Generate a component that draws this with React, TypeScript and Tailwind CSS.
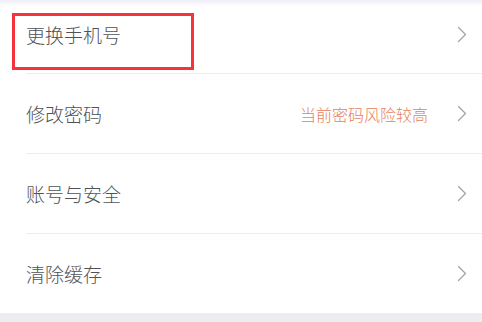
const rows = [
  { label: '更换手机号', hint: '' },
  { label: '修改密码', hint: '当前密码风险较高' },
  { label: '账号与安全', hint: '' },
  { label: '清除缓存', hint: '' },
]

function Chevron() {
  return (
    <svg width="10" height="17" viewBox="0 0 10 17" fill="none" className="shrink-0">
      <path d="M1.5 1.5 L8.5 8.5 L1.5 15.5" stroke="#a2a4a9" strokeWidth="1.3" strokeLinecap="round" strokeLinejoin="round" />
    </svg>
  )
}

export default function App() {
  return (
    <div
      className="relative w-[482px] h-[322px] overflow-hidden bg-white flex flex-col"
      style={{ fontFamily: '"Noto Sans CJK SC", "Noto Sans", sans-serif' }}
    >
      <div className="absolute top-0 left-0 right-0 h-[6px] bg-gradient-to-b from-[#eeeef8] to-white" />
      <ul className="relative flex flex-col">
        {rows.map((row, i) => (
          <li key={row.label} className="flex flex-col">
            <div
              className={`flex items-center pl-[26px] pr-[15px] ${i === 0 ? 'h-[73px] pb-[5px]' : 'h-[79px]'}`}
            >
              <span className="flex-1 text-[19px] font-light leading-none text-[#505257]">{row.label}</span>
              {row.hint && (
                <span className="mr-[29px] text-[16px] font-light leading-none text-[#e57e58]">{row.hint}</span>
              )}
              <Chevron />
            </div>
            {i < rows.length - 1 && <div className="ml-[26px] h-px bg-[#ececef]" />}
          </li>
        ))}
      </ul>
      <div className="flex-1 bg-[#ebedf2]" />
      <div className="absolute left-[12px] top-[13px] w-[182px] h-[57px] border-[3px] border-[#f5333a]" />
    </div>
  )
}
